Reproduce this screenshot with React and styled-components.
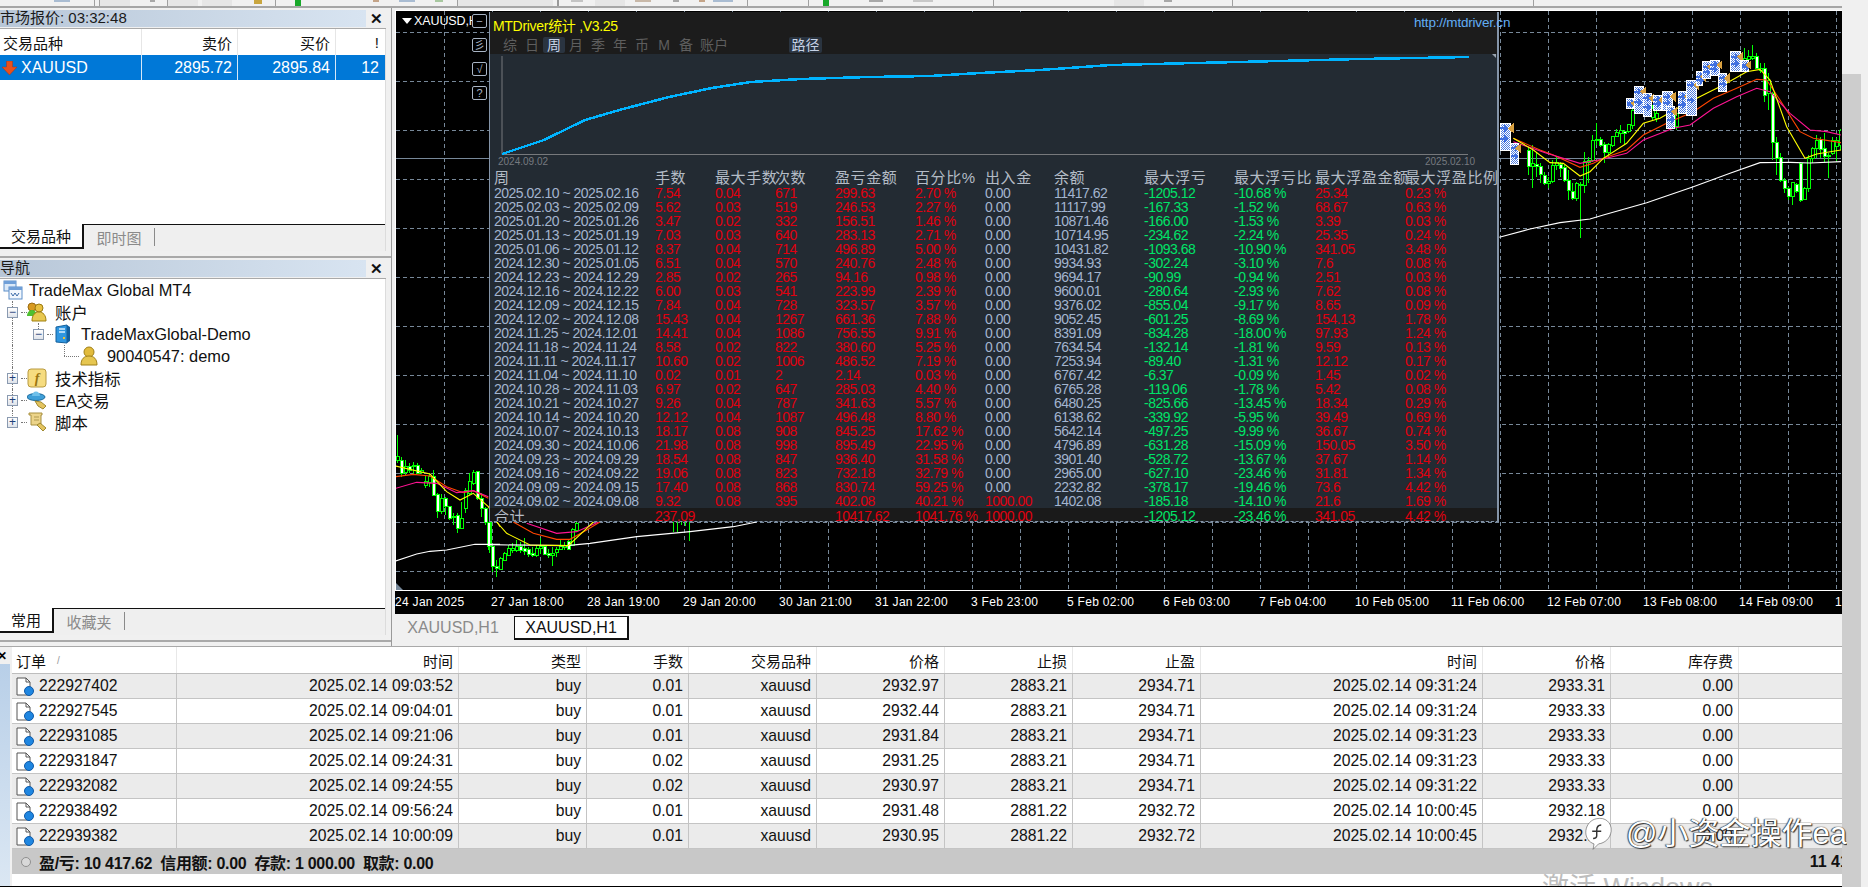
import styled, { createGlobalStyle } from 'styled-components';

const UI_FONT = `"Liberation Sans", "Noto Sans CJK SC", sans-serif`;

const GlobalStyle = createGlobalStyle`
    html, body {
        margin: 0;
        padding: 0;
        background: #f0f0f0;
    }
    #root {
        width: 1868px;
        height: 887px;
    }
`;

const Page = styled.div`
    position: relative;
    display: grid;
    grid-template-columns: 1842px 19px 7px;
    grid-template-rows: 74px 1fr;
    width: 1868px;
    height: 887px;
    overflow: hidden;
    font-family: ${UI_FONT};
    background: #f0f0f0;
    color: #000;
`;

const Main = styled.div`
    grid-row: 1 / 3;
    grid-column: 1;
    display: flex;
    flex-direction: column;
    min-width: 0;
`;

const ScrollTrack = styled.div`
    grid-row: 1;
    grid-column: 2 / 4;
    background: #f0f0f0;
`;
const ScrollThumb = styled.div`
    grid-row: 2;
    grid-column: 2;
    background: #cdcdcd;
`;

/* ---------- toolbar, only the bottom sliver of it is on screen ---------- */

const Toolbar = styled.div`
    display: flex;
    align-items: flex-start;
    height: 6px;
    flex: none;
    background: #f1f1f1;
    border-bottom: 2px solid #a6a6a6;
    overflow: hidden;
`;
const ToolBit = styled.span`
    flex: none;
    width: ${({ $w }) => $w}px;
    height: ${({ $h }) => $h || 6}px;
    margin-left: ${({ $gap }) => $gap}px;
    background: ${({ $color }) => $color};
`;

const toolBits = [
    [54, 16, 2, '#a9bcd2'], [24, 1, 6, '#a0a0a0'], [4, 1, 6, '#a0a0a0'], [0, 30, 6, '#e6e6e6'],
    [20, 5, 2, '#a8a8a8'], [12, 1, 6, '#a0a0a0'], [0, 30, 6, '#e6e6e6'], [4, 30, 6, '#e6e6e6'],
    [22, 8, 4, '#c9a640'], [13, 1, 6, '#a0a0a0'], [19, 6, 6, '#18a82a'], [72, 6, 2, '#c4a488'],
    [20, 16, 2, '#a9bcd2'], [20, 8, 2, '#a8c8a0'], [14, 1, 6, '#a0a0a0'], [0, 95, 6, '#e6e6e6'],
    [4, 2, 6, '#999999'], [12, 12, 2, '#c4c4c4'], [12, 30, 6, '#e6e6e6'], [10, 16, 2, '#c8b8a8'],
    [22, 6, 2, '#a8a8a8'], [20, 6, 2, '#c4a488'], [8, 20, 2, '#a9bcd2'], [14, 1, 6, '#a0a0a0'],
    [60, 1, 6, '#a0a0a0'], [14, 6, 6, '#18a82a'], [40, 14, 2, '#a8a8a8'], [30, 20, 2, '#c8c8c8'],
    [60, 1, 6, '#a0a0a0'], [120, 30, 6, '#e6e6e6'], [20, 8, 2, '#a8a8a8'], [60, 1, 6, '#a0a0a0'],
    [300, 1, 6, '#a0a0a0'],
];

/* ---------- left side panels ---------- */

const Workspace = styled.div`
    display: flex;
    height: 638px;
    flex: none;
`;

const Sidebar = styled.div`
    display: flex;
    flex-direction: column;
    width: 392px;
    flex: none;
    border-right: 1px solid #9a9a9a;
    box-sizing: border-box;
`;

const Panel = styled.section`
    display: flex;
    flex-direction: column;
    height: ${({ $height }) => $height}px;
    padding: 2px 5px 5px 0;
    box-sizing: border-box;
    border-bottom: 2px solid #a9a9a9;
`;

const PanelHeader = styled.header`
    display: flex;
    align-items: center;
    height: 17px;
    flex: none;
    border-bottom: 1px solid #a9a9a9;
    padding-bottom: 1px;
`;
const PanelTitle = styled.div`
    flex: 1;
    height: 17px;
    line-height: 15px;
    font-size: 15px;
    color: #1a1a1a;
    background: linear-gradient(to right, #b8c7d8, #d8e4f1);
    white-space: nowrap;
`;
const CloseBox = styled.span`
    width: 20px;
    flex: none;
    font-size: 15px;
    line-height: 16px;
    font-weight: bold;
    text-align: center;
    color: #111;
`;

const PanelBody = styled.div`
    flex: 1;
    background: #fff;
    min-height: 0;
    border-right: 1px solid #dcdcdc;
`;

const QuoteGrid = styled.div`
    display: grid;
    grid-template-columns: 142px 96px 98px 48px;
    height: ${({ $head }) => ($head ? 26 : 25)}px;
    align-items: center;
    background: ${({ $head }) => ($head ? '#fff' : '#0078d7')};
    color: ${({ $head }) => ($head ? '#111' : '#fff')};
`;
const QuoteCell = styled.div`
    display: flex;
    align-items: center;
    justify-content: ${({ $left }) => ($left ? 'flex-start' : 'flex-end')};
    height: 100%;
    padding: ${({ $left }) => ($left ? '0 0 0 3px' : '0 5px 0 0')};
    box-sizing: border-box;
    border-right: 1px solid ${({ $head }) => ($head ? '#e6e6e6' : '#d6e8f8')};
    font-size: ${({ $head }) => ($head ? 15 : 16)}px;
    &:last-child {
        border-right: none;
    }
`;

const TabStrip = styled.div`
    display: flex;
    height: 27px;
    flex: none;
    box-sizing: border-box;
    background: #efefef;
    border-right: 1px solid #dcdcdc;
`;
const SideTab = styled.div`
    display: flex;
    align-items: center;
    justify-content: center;
    box-sizing: border-box;
    height: 25px;
    width: ${({ $w }) => $w}px;
    flex: none;
    font-size: 15px;
    ${({ $active }) => ($active
        ? 'background:#fff;color:#111;border-right:2px solid #111;border-bottom:2px solid #111;'
        : 'color:#8a8a8a;border-top:1px solid #111;')}
`;
const TabDivider = styled.div`
    flex: 1;
    height: 25px;
    border-top: 1px solid #111;
    box-sizing: border-box;
    &::before {
        content: '';
        display: block;
        width: 1px;
        height: 18px;
        margin-top: 3px;
        background: #8a8a8a;
    }
`;

const Tree = styled.div``;
const TreeRow = styled.div`
    position: relative;
    display: flex;
    align-items: center;
    height: 22px;
    padding-left: ${({ $indent }) => $indent}px;
    font-size: 16.4px;
    color: #111;
    white-space: nowrap;
    /* dotted stem of the tree */
    &::before {
        content: '';
        display: ${({ $stem }) => ($stem ? 'block' : 'none')};
        position: absolute;
        left: 12px;
        top: 0;
        height: ${({ $stem }) => $stem}px;
        border-left: 1px dotted #777;
    }
    /* short stem coming down from the parent row */
    &::after {
        content: '';
        display: ${({ $elbow }) => ($elbow ? 'block' : 'none')};
        position: absolute;
        left: ${({ $elbow }) => $elbow}px;
        top: 0;
        height: ${({ $elbowH }) => $elbowH || 6}px;
        border-left: 1px dotted #777;
    }
`;
const Expander = styled.span`
    position: relative;
    z-index: 1;
    flex: none;
    width: 9px;
    height: 9px;
    margin-right: 3px;
    border: 1px solid #8a9ab0;
    background: linear-gradient(#fff, #dfe3ea);
    display: flex;
    align-items: center;
    justify-content: center;
    font-size: 12px;
    line-height: 9px;
    color: #1f3f7a;
`;
const Dots = styled.span`
    flex: none;
    width: ${({ $w }) => $w || 6}px;
    border-top: 1px dotted #777;
`;
const TreeIcon = styled.svg`
    flex: none;
    width: 20px;
    height: 20px;
    margin-right: ${({ $gap }) => $gap || 8}px;
`;

const AccountsIcon = () => (
    <TreeIcon viewBox="0 0 20 20">
        <circle cx="5" cy="5" r="4" fill="#d89a20" stroke="#9a6a10" />
        <path d="M0 14c0-4 3-6 5-6s5 2 5 6z" fill="#50c030" />
        <circle cx="12" cy="6" r="4" fill="#e8c040" stroke="#9a7a10" />
        <path d="M5 19c0-6 3-9 7-9s7 3 7 9z" fill="#e8c850" stroke="#a08010" />
    </TreeIcon>
);
const ServerIcon = () => (
    <TreeIcon viewBox="0 0 20 20">
        <path d="M3 3l11-2v18l-11-1z" fill="#2f96e0" stroke="#15609c" />
        <path d="M14 1l3 2v14l-3 2z" fill="#145f9e" />
        <path d="M6 5h6M6 8h6" stroke="#d7eeff" strokeWidth="1.5" />
        <rect x="10" y="13" width="2" height="2" fill="#f2c230" />
    </TreeIcon>
);
const UserIcon = () => (
    <TreeIcon viewBox="0 0 20 20">
        <circle cx="10" cy="6" r="5" fill="#e2bb3c" stroke="#a08018" />
        <path d="M2 19c0-6 3-9 8-9s8 3 8 9z" fill="#e6c650" stroke="#a08018" />
    </TreeIcon>
);
const FunctionIcon = () => (
    <TreeIcon viewBox="0 0 20 20">
        <rect x="1" y="1" width="18" height="18" rx="3" fill="#f6dc80" stroke="#b89a40" />
        <text x="10" y="15" fontSize="14" fontStyle="italic" fontWeight="bold" textAnchor="middle" fill="#9a7410" fontFamily="Liberation Serif">f</text>
    </TreeIcon>
);
const ExpertIcon = () => (
    <TreeIcon viewBox="0 0 20 20">
        <ellipse cx="9" cy="7" rx="9" ry="3.5" fill="#3f9fd8" stroke="#1a6a9c" />
        <path d="M5 6c0-6 8-6 8 0z" fill="#6fc0ea" />
        <path d="M8 11l6 1 5 4-3 3-5-3z" fill="#e4c460" stroke="#a08a30" />
    </TreeIcon>
);
const ScriptIcon = () => (
    <TreeIcon viewBox="0 0 20 20">
        <path d="M2 1h13v2h-1v10H4V3H2z" fill="#ecd48a" stroke="#a89040" />
        <path d="M7 5h5M7 8h5" stroke="#b09a50" />
        <path d="M10 13l3-2 6 5-3 3z" fill="#e4c460" stroke="#a08a30" />
    </TreeIcon>
);
const RootIcon = () => (
    <TreeIcon viewBox="0 0 20 20" $gap={6}>
        <rect x="1" y="1" width="12" height="10" fill="#dbe9f8" stroke="#5c8ec8" />
        <rect x="1" y="1" width="12" height="3" fill="#6f9fd8" />
        <rect x="6" y="7" width="13" height="12" fill="#f2f7fd" stroke="#5c8ec8" />
        <rect x="6" y="7" width="13" height="3" fill="#6f9fd8" />
        <path d="M8 13l2 3 2-3 2 3 2-3" fill="none" stroke="#3c6aa8" />
    </TreeIcon>
);
const SellArrowSvg = styled.svg`
    flex: none;
    margin: 0 4px 0 -1px;
`;
const SellArrow = () => (
    <SellArrowSvg width="15" height="14" viewBox="0 0 15 14">
        <path d="M4.5 0h6v6H15L7.500 14 0 6h4.500z" fill="#e8501c" stroke="#b03010" strokeWidth=".5" />
    </SellArrowSvg>
);

/* ---------- chart ---------- */

const ChartColumn = styled.div`
    display: flex;
    flex-direction: column;
    flex: 1;
    min-width: 0;
    padding-top: 2px;
`;
const ChartWindow = styled.div`
    display: flex;
    flex-direction: column;
    height: 604px;
    flex: none;
    margin-left: 3px;
    background: #000;
    border-top: 1px solid #fff;
    box-sizing: border-box;
`;
const Plot = styled.div`
    position: relative;
    height: 579px;
    flex: none;
    border-left: 1px solid #fff;
    border-bottom: 1px solid #fff;
    overflow: hidden;
    box-sizing: content-box;
`;
const PlotSvg = styled.svg`
    display: block;
`;
const TimeAxis = styled.div`
    display: flex;
    height: 23px;
    overflow: hidden;
    color: #fff;
    font-size: 12px;
    letter-spacing: 0.3px;
    align-items: center;
    padding-bottom: 1px;
    box-sizing: border-box;
`;
const TimeLabel = styled.span`
    flex: none;
    width: 96px;
    white-space: nowrap;
`;
const SymbolLabel = styled.div`
    position: absolute;
    left: 6px;
    top: 1px;
    display: flex;
    align-items: center;
    width: 70px;
    height: 18px;
    overflow: hidden;
    color: #fff;
    font-size: 12.5px;
    letter-spacing: -0.1px;
    white-space: nowrap;
    &::before {
        content: '';
        flex: none;
        width: 0;
        height: 0;
        margin-right: 2px;
        border-left: 5px solid transparent;
        border-right: 5px solid transparent;
        border-top: 6px solid #fff;
    }
`;
const SideButtons = styled.div`
    position: absolute;
    left: 76px;
    top: 3px;
    display: flex;
    flex-direction: column;
    gap: 10px;
`;
const SideButton = styled.span`
    display: flex;
    align-items: center;
    justify-content: center;
    width: 13px;
    height: 12px;
    border: 1px solid #a8b4c4;
    border-radius: 2px;
    background: #000;
    font-size: 11px;
    line-height: 11px;
    color: #a8b4c4;
`;

const ChartTabs = styled.div`
    display: flex;
    align-items: flex-end;
    height: 26px;
    flex: none;
    padding-bottom: 3px;
`;
const ChartTab = styled.div`
    display: flex;
    align-items: center;
    justify-content: center;
    box-sizing: border-box;
    height: 24px;
    width: ${({ $active }) => ($active ? 115 : 122)}px;
    font-size: 16px;
    ${({ $active }) => ($active
        ? 'background:#fff;color:#111;border:1px solid #111;border-bottom-width:2px;border-right-width:2px;'
        : 'color:#8a8a8a;')}
`;

/* ---------- statistics panel floating over the chart ---------- */

const StatsPanel = styled.div`
    position: absolute;
    left: 93px;
    top: 1px;
    width: 1010px;
    height: 510px;
    box-sizing: border-box;
    background: #232b33;
    border-right: 2px solid #8494a8;
    border-bottom: 1px dashed #8494a8;
    border-left: 1px solid #8494a8;
    overflow: hidden;
    display: flex;
    flex-direction: column;
`;
const StatsTop = styled.div`
    height: 42px;
    flex: none;
    background: #1c1c1c;
`;
const StatsTitle = styled.div`
    height: 25px;
    padding-left: 3px;
    display: flex;
    align-items: center;
    font-size: 14px;
    letter-spacing: -0.3px;
    color: #ffff00;
`;
const StatsTabs = styled.div`
    display: flex;
    height: 17px;
    padding-left: 9px;
`;
const StatsTab = styled.span`
    flex: none;
    width: ${({ $w }) => $w || 22}px;
    margin-right: ${({ $gap }) => $gap || 0}px;
    height: 16px;
    line-height: 16px;
    text-align: center;
    font-size: 14px;
    border-radius: 2px;
    color: ${({ $on }) => ($on ? '#c6d2e6' : '#5e5e5e')};
    background: ${({ $on }) => ($on ? '#2a3440' : 'transparent')};
`;
const LinkLabel = styled.div`
    position: absolute;
    left: 1018px;
    top: 4px;
    font-size: 13.5px;
    letter-spacing: -0.2px;
    color: #62aef5;
    white-space: nowrap;
`;
const EquitySvg = styled.svg`
    display: block;
    flex: none;
`;
const StatRow = styled.div`
    display: grid;
    grid-template-columns: 161px 60px 60px 60px 80px 70px 69px 90px 90px 81px 90px 1fr;
    height: ${({ $h }) => $h}px;
    line-height: ${({ $lh, $h }) => $lh || $h}px;
    padding-left: 4px;
    flex: none;
    overflow: hidden;
    white-space: nowrap;
    font-size: 14px;
    letter-spacing: -0.5px;
    background: ${({ $total }) => ($total ? '#1a1a1a' : 'transparent')};
`;
const HeadCell = styled.span`
    font-size: 15px;
    letter-spacing: 0.6px;
    color: #b4bcc6;
    white-space: nowrap;
`;
const COLORS = { red: '#e0000f', green: '#00e468', slate: '#a3b5cf' };
const StatCell = styled.span`
    color: ${({ $tone }) => COLORS[$tone]};
`;

/* ---------- terminal at the bottom ---------- */

const Terminal = styled.div`
    position: relative;
    display: flex;
    height: 241px;
    flex: none;
    border-bottom: 1px solid #000;
    box-sizing: border-box;
    border-top: 1px solid #a9a9a9;
    overflow: hidden;
`;
const TerminalStrip = styled.div`
    width: 12px;
    flex: none;
    background: linear-gradient(#f0f0f0 0 17px, #b8cfe8 17px, #dbe7f3);
    font-size: 12px;
    font-weight: bold;
    line-height: 18px;
    overflow: hidden;
    text-indent: -3px;
    border-right: 2px solid #f0f0f0;
    box-sizing: border-box;
`;
const TerminalBody = styled.div`
    flex: 1;
    background: #fff;
    min-width: 0;
`;
const ORDER_COLUMNS = '165px 282px 128px 102px 128px 128px 128px 128px 282px 128px 128px 1fr';
const OrderHead = styled.div`
    display: grid;
    grid-template-columns: ${ORDER_COLUMNS};
    height: 26px;
    background: #fff;
    border-bottom: 1px solid #bdbdbd;
    font-size: 15px;
    color: #111;
`;
const OrderRow = styled.div`
    display: grid;
    grid-template-columns: ${ORDER_COLUMNS};
    height: 25px;
    box-sizing: border-box;
    background: ${({ $odd }) => ($odd ? '#ebebeb' : '#fff')};
    border-bottom: 1px solid #c4c4c4;
    font-size: 15.7px;
    color: #111;
`;
const OrderCell = styled.div`
    display: flex;
    align-items: center;
    justify-content: ${({ $first }) => ($first ? 'flex-start' : 'flex-end')};
    padding: ${({ $first }) => ($first ? '0 0 0 4px' : '0 5px 0 0')};
    border-right: 1px solid ${({ $head }) => ($head ? '#e8e8e8' : '#c4c4c4')};
    white-space: nowrap;
    &:last-child {
        border-right: none;
    }
`;
const SortMark = styled.span`
    margin-left: 11px;
    font-size: 10px;
    color: #999;
`;
const DocIcon = styled.svg`
    flex: none;
    width: 18px;
    height: 19px;
    margin-right: 5px;
`;
const OrderIcon = () => (
    <DocIcon viewBox="0 0 18 19">
        <path d="M1 1h9l4 4v13H1z" fill="#fff" stroke="#555" />
        <path d="M10 1v4h4" fill="none" stroke="#555" />
        <circle cx="13" cy="14" r="4.500" fill="#1f86e0" stroke="#0f5aa8" />
    </DocIcon>
);
const Summary = styled.div`
    display: flex;
    align-items: center;
    justify-content: space-between;
    height: 25px;
    background: #c8c8c8;
    font-size: 16px;
    font-weight: bold;
    color: #111;
    padding-left: 9px;
    white-space: nowrap;
    overflow: hidden;
`;
const SummaryLeft = styled.div`
    display: flex;
    align-items: center;
    gap: 8px;
    letter-spacing: -0.3px;
`;
const SummaryRight = styled.div`
    margin-right: -38px;
`;
const StatusDot = styled.span`
    flex: none;
    width: 8px;
    height: 8px;
    border: 1px solid #8f8f8f;
    border-radius: 50%;
    background: #d8d8d8;
`;
const ActivateHint = styled.div`
    position: absolute;
    left: 1542px;
    top: 225px;
    font-size: 27px;
    line-height: 32px;
    color: #bdbdbd;
    white-space: nowrap;
`;
const Watermark = styled.div`
    position: absolute;
    left: 1585px;
    top: 816px;
    display: flex;
    align-items: center;
    gap: 14px;
    width: 262px;
    overflow: hidden;
    font-size: 31px;
    line-height: 36px;
    color: #fff;
    white-space: nowrap;
    text-shadow: 0 0 1px #111, 1px 1px 1px #333, -1px 0 1px #555;
`;

/* ---------- data ---------- */

const stats = [
    ['2025.02.10 ~ 2025.02.16', '7.54', '0.04', '671', '299.63', '2.70 %', '0.00', '11417.62', '-1205.12', '-10.68 %', '25.34', '0.23 %'],
    ['2025.02.03 ~ 2025.02.09', '5.62', '0.03', '519', '246.53', '2.27 %', '0.00', '11117.99', '-167.33', '-1.52 %', '68.67', '0.63 %'],
    ['2025.01.20 ~ 2025.01.26', '3.47', '0.02', '332', '156.51', '1.46 %', '0.00', '10871.46', '-166.00', '-1.53 %', '3.39', '0.03 %'],
    ['2025.01.13 ~ 2025.01.19', '7.03', '0.03', '640', '283.13', '2.71 %', '0.00', '10714.95', '-234.62', '-2.24 %', '25.35', '0.24 %'],
    ['2025.01.06 ~ 2025.01.12', '8.37', '0.04', '714', '496.89', '5.00 %', '0.00', '10431.82', '-1093.68', '-10.90 %', '341.05', '3.48 %'],
    ['2024.12.30 ~ 2025.01.05', '6.51', '0.04', '570', '240.76', '2.48 %', '0.00', '9934.93', '-302.24', '-3.10 %', '7.6', '0.08 %'],
    ['2024.12.23 ~ 2024.12.29', '2.85', '0.02', '265', '94.16', '0.98 %', '0.00', '9694.17', '-90.99', '-0.94 %', '2.51', '0.03 %'],
    ['2024.12.16 ~ 2024.12.22', '6.00', '0.03', '541', '223.99', '2.39 %', '0.00', '9600.01', '-280.64', '-2.93 %', '7.62', '0.08 %'],
    ['2024.12.09 ~ 2024.12.15', '7.84', '0.04', '728', '323.57', '3.57 %', '0.00', '9376.02', '-855.04', '-9.17 %', '8.65', '0.09 %'],
    ['2024.12.02 ~ 2024.12.08', '15.43', '0.04', '1267', '661.36', '7.88 %', '0.00', '9052.45', '-601.25', '-8.69 %', '154.13', '1.78 %'],
    ['2024.11.25 ~ 2024.12.01', '14.41', '0.04', '1086', '756.55', '9.91 %', '0.00', '8391.09', '-834.28', '-18.00 %', '97.93', '1.24 %'],
    ['2024.11.18 ~ 2024.11.24', '8.58', '0.02', '822', '380.60', '5.25 %', '0.00', '7634.54', '-132.14', '-1.81 %', '9.59', '0.13 %'],
    ['2024.11.11 ~ 2024.11.17', '10.60', '0.02', '1006', '486.52', '7.19 %', '0.00', '7253.94', '-89.40', '-1.31 %', '12.12', '0.17 %'],
    ['2024.11.04 ~ 2024.11.10', '0.02', '0.01', '2', '2.14', '0.03 %', '0.00', '6767.42', '-6.37', '-0.09 %', '1.45', '0.02 %'],
    ['2024.10.28 ~ 2024.11.03', '6.97', '0.02', '647', '285.03', '4.40 %', '0.00', '6765.28', '-119.06', '-1.78 %', '5.42', '0.08 %'],
    ['2024.10.21 ~ 2024.10.27', '9.26', '0.04', '787', '341.63', '5.57 %', '0.00', '6480.25', '-825.66', '-13.45 %', '18.34', '0.29 %'],
    ['2024.10.14 ~ 2024.10.20', '12.12', '0.04', '1087', '496.48', '8.80 %', '0.00', '6138.62', '-339.92', '-5.95 %', '39.49', '0.69 %'],
    ['2024.10.07 ~ 2024.10.13', '18.17', '0.08', '908', '845.25', '17.62 %', '0.00', '5642.14', '-497.25', '-9.99 %', '36.67', '0.74 %'],
    ['2024.09.30 ~ 2024.10.06', '21.98', '0.08', '998', '895.49', '22.95 %', '0.00', '4796.89', '-631.28', '-15.09 %', '150.05', '3.50 %'],
    ['2024.09.23 ~ 2024.09.29', '18.54', '0.08', '847', '936.40', '31.58 %', '0.00', '3901.40', '-528.72', '-13.67 %', '37.67', '1.14 %'],
    ['2024.09.16 ~ 2024.09.22', '19.06', '0.08', '823', '732.18', '32.79 %', '0.00', '2965.00', '-627.10', '-23.46 %', '31.81', '1.34 %'],
    ['2024.09.09 ~ 2024.09.15', '17.40', '0.08', '868', '830.74', '59.25 %', '0.00', '2232.82', '-378.17', '-19.46 %', '73.6', '4.42 %'],
    ['2024.09.02 ~ 2024.09.08', '9.32', '0.08', '395', '402.08', '40.21 %', '1000.00', '1402.08', '-185.18', '-14.10 %', '21.6', '1.69 %'],
];
const statHeads = ['周', '手数', '最大手数', '次数', '盈亏金额', '百分比%', '出入金', '余额', '最大浮亏', '最大浮亏比', '最大浮盈金额', '最大浮盈比例'];
const statTotal = ['', '237.09', '', '', '10417.62', '1041.76 %', '1000.00', '', '-1205.12', '-23.46 %', '341.05', '4.42 %'];
const toneOf = (i, value) => {
    if (i === 0 || i === 7) return 'slate';
    if (i === 6) return value === '0.00' ? 'slate' : 'red';
    return i === 8 || i === 9 ? 'green' : 'red';
};

const orders = [
    ['222927402', '2025.02.14 09:03:52', '0.01', '2932.97', '2883.21', '2934.71', '2025.02.14 09:31:24', '2933.31'],
    ['222927545', '2025.02.14 09:04:01', '0.01', '2932.44', '2883.21', '2934.71', '2025.02.14 09:31:24', '2933.33'],
    ['222931085', '2025.02.14 09:21:06', '0.01', '2931.84', '2883.21', '2934.71', '2025.02.14 09:31:23', '2933.33'],
    ['222931847', '2025.02.14 09:24:31', '0.02', '2931.25', '2883.21', '2934.71', '2025.02.14 09:31:23', '2933.33'],
    ['222932082', '2025.02.14 09:24:55', '0.02', '2930.97', '2883.21', '2934.71', '2025.02.14 09:31:22', '2933.33'],
    ['222938492', '2025.02.14 09:56:24', '0.01', '2931.48', '2881.22', '2932.72', '2025.02.14 10:00:45', '2932.18'],
    ['222939382', '2025.02.14 10:00:09', '0.01', '2930.95', '2881.22', '2932.72', '2025.02.14 10:00:45', '2932.18'],
];
const orderHeads = ['时间', '类型', '手数', '交易品种', '价格', '止损', '止盈', '时间', '价格', '库存费', ''];

const timeLabels = ['24 Jan 2025', '27 Jan 18:00', '28 Jan 19:00', '29 Jan 20:00', '30 Jan 21:00', '31 Jan 22:00', '3 Feb 23:00', '5 Feb 02:00', '6 Feb 03:00', '7 Feb 04:00', '10 Feb 05:00', '11 Feb 06:00', '12 Feb 07:00', '13 Feb 08:00', '14 Feb 09:00', '17 Feb 10:00'];

// all chart numbers were read off 3x crops, so they get mapped back to page pixels here
const leftMap = (x, y) => [x / 3, 250 + y / 3];
const midMap = (x, y) => [390 + x / 3, 450 + y / 3];
const rightMap = (x, y) => [1480 + x / 3, 30 + y / 3];

// x, body top, body bottom, wick top, wick bottom, 1 = hollow (rising)
const leftCandles = [
    [1190, 620, 630, 555, 640, 1], [1202, 630, 670, 620, 680, 0], [1214, 650, 668, 630, 675, 1], [1226, 648, 660, 640, 670, 0],
    [1238, 645, 650, 635, 672, 0], [1250, 645, 670, 640, 672, 0], [1262, 660, 668, 655, 672, 1], [1274, 695, 705, 675, 715, 1],
    [1286, 680, 697, 670, 710, 1], [1298, 678, 735, 660, 735, 0], [1310, 733, 785, 730, 803, 0], [1322, 745, 785, 732, 793, 1],
    [1334, 745, 770, 740, 795, 0], [1346, 770, 805, 768, 810, 0], [1358, 798, 803, 790, 825, 1], [1370, 795, 835, 790, 850, 0],
    [1382, 805, 835, 755, 838, 1], [1394, 720, 775, 715, 790, 1], [1406, 695, 730, 668, 735, 1], [1418, 668, 700, 660, 705, 1],
    [1430, 665, 745, 662, 750, 0], [1442, 745, 775, 730, 800, 0], [1454, 775, 818, 770, 825, 0], [1466, 818, 888, 815, 910, 0],
];
const midCandles = [
    [295, 218, 288, 218, 300, 0], [307, 290, 350, 288, 365, 0], [319, 350, 355, 330, 380, 0], [331, 325, 357, 322, 358, 1],
    [343, 310, 330, 306, 333, 1], [355, 295, 315, 285, 318, 1], [367, 295, 300, 280, 310, 1], [379, 290, 300, 270, 305, 1],
    [391, 290, 300, 277, 310, 0], [403, 295, 305, 265, 315, 0], [415, 298, 312, 290, 322, 0], [427, 310, 315, 290, 320, 0],
    [439, 295, 317, 285, 322, 1], [451, 290, 295, 265, 312, 1], [463, 290, 312, 285, 315, 0], [475, 310, 315, 298, 325, 0],
    [487, 310, 315, 290, 348, 1], [499, 297, 307, 290, 320, 1], [511, 290, 297, 270, 300, 1], [523, 285, 292, 275, 300, 1],
    [535, 275, 297, 270, 300, 0], [547, 238, 285, 235, 287, 1], [559, 220, 240, 215, 242, 1],
    [848, 200, 210, 200, 245, 1], [860, 200, 210, 200, 246, 1], [872, 200, 210, 200, 225, 1], [884, 200, 210, 200, 228, 1], [896, 205, 215, 205, 272, 1],
];
const rightCandles = [
    [145, 360, 408, 350, 435, 0], [157, 400, 410, 345, 475, 1], [169, 403, 410, 365, 440, 0], [181, 408, 432, 400, 460, 0],
    [193, 435, 460, 425, 465, 0], [205, 453, 460, 440, 475, 1], [217, 405, 455, 390, 460, 1], [229, 398, 405, 380, 420, 1],
    [241, 403, 415, 395, 440, 0], [253, 412, 452, 405, 455, 0], [265, 450, 482, 420, 510, 0], [277, 484, 505, 460, 510, 0],
    [289, 460, 505, 455, 512, 1], [301, 462, 467, 455, 625, 0], [313, 395, 465, 365, 488, 1], [325, 390, 397, 380, 460, 1],
    [337, 330, 392, 315, 395, 1], [349, 327, 332, 280, 345, 1], [361, 328, 345, 320, 350, 0], [373, 343, 368, 335, 400, 0],
    [385, 342, 368, 338, 385, 1], [397, 320, 345, 318, 350, 1], [409, 307, 318, 298, 320, 1], [421, 302, 310, 285, 340, 1],
    [433, 303, 310, 300, 342, 0], [445, 284, 305, 283, 310, 1], [457, 240, 285, 235, 297, 1], [517, 235, 262, 225, 270, 1],
    [529, 250, 265, 240, 275, 1], [589, 250, 290, 245, 300, 1], [793, 85, 90, 55, 95, 1], [805, 80, 88, 60, 90, 1],
    [817, 80, 85, 45, 90, 1], [829, 80, 115, 70, 118, 0], [841, 115, 120, 100, 130, 1], [853, 115, 195, 100, 215, 0],
    [865, 150, 190, 130, 240, 1], [877, 190, 338, 185, 390, 0], [889, 338, 385, 320, 435, 0], [901, 382, 450, 370, 455, 0],
    [913, 450, 475, 445, 490, 0], [925, 475, 500, 470, 510, 0], [937, 458, 500, 455, 525, 1], [949, 462, 485, 460, 490, 0],
    [961, 400, 510, 395, 515, 0], [973, 475, 508, 470, 510, 1], [985, 385, 475, 375, 485, 1], [997, 355, 385, 350, 400, 1],
    [1009, 330, 355, 315, 385, 1], [1021, 328, 358, 320, 385, 0], [1033, 355, 380, 310, 395, 0], [1045, 375, 380, 370, 445, 1],
    [1057, 330, 370, 320, 375, 1], [1069, 332, 350, 325, 392, 1], [1081, 300, 345, 298, 360, 1],
];

const leftLines = {
    white: [[1187, 933], [1250, 912], [1290, 904], [1340, 900], [1425, 883], [1500, 883]],
    yellow: [[1187, 648], [1290, 672], [1340, 725], [1380, 750], [1420, 730], [1465, 770], [1500, 830]],
    orange: [[1187, 680], [1240, 673], [1290, 678], [1340, 710], [1390, 728], [1420, 722], [1465, 745]],
    pink: [[1187, 715], [1250, 697], [1310, 700], [1370, 728], [1420, 722], [1465, 740]],
};
const midLines = {
    white: [[295, 284], [530, 287], [600, 280], [740, 260], [900, 245], [1030, 230], [1100, 216]],
    yellow: [[320, 216], [350, 250], [420, 285], [535, 287], [590, 235], [610, 216]],
    orange: [[370, 216], [430, 250], [500, 268], [540, 268], [590, 240], [630, 216]],
    pink: [[410, 220], [500, 250], [560, 245], [625, 216]],
};
const rightLines = {
    white: [[58, 622], [150, 597], [240, 578], [330, 567], [370, 555], [500, 518], [640, 470], [750, 430], [840, 398], [930, 397], [990, 399], [1083, 395]],
    yellow: [[100, 325], [160, 360], [210, 398], [250, 400], [300, 438], [330, 425], [370, 385], [440, 340], [490, 280], [540, 265], [600, 230], [680, 190], [730, 165], [800, 125], [840, 118], [870, 150], [920, 290], [975, 385], [1010, 372], [1083, 360]],
    orange: [[100, 325], [180, 360], [220, 375], [300, 412], [340, 400], [370, 385], [440, 360], [490, 315], [560, 280], [640, 245], [700, 205], [770, 175], [830, 148], [860, 150], [900, 210], [960, 305], [1000, 325], [1083, 338]],
    pink: [[100, 335], [200, 370], [300, 400], [370, 387], [440, 370], [490, 330], [580, 295], [630, 285], [700, 235], [770, 200], [830, 175], [870, 185], [930, 250], [990, 300], [1040, 305], [1083, 315]],
};
const lineColors = { white: '#ffffff', orange: '#ff4500', pink: '#ff1493', yellow: '#ffff00' };

// trade markers: x, y, w, h in crop numbers
const markers = [
    [60, 280, 32, 80], [92, 340, 22, 62], [440, 205, 20, 30], [463, 170, 26, 80], [490, 190, 24, 70], [520, 195, 24, 45],
    [548, 185, 30, 55], [560, 230, 22, 65], [595, 185, 25, 65], [620, 150, 28, 105], [648, 125, 20, 40], [668, 95, 22, 50],
    [690, 90, 28, 45], [716, 130, 24, 55], [752, 65, 28, 60], [785, 90, 20, 35],
];

const Candle = ({ row, map }) => {
    const [x0, top, bottom, wickTop, wickBottom, hollow] = row;
    const [x, yTop] = map(x0, top);
    const [, yBottom] = map(x0, bottom);
    const [, wTop] = map(x0, wickTop);
    const [, wBottom] = map(x0, wickBottom);
    const cx = Math.round(x) + 0.5;
    return (
        <g shapeRendering="crispEdges">
            <line x1={cx} x2={cx} y1={wTop} y2={wBottom} stroke="#00ff00" />
            <rect x={cx - 1.5} y={yTop} width={3} height={Math.max(yBottom - yTop, 1)} fill={hollow ? '#000' : '#fff'} stroke="#00ff00" />
        </g>
    );
};

const Line = ({ points, map, color }) => (
    <polyline points={points.map(([x, y]) => map(x, y).join(',')).join(' ')} fill="none" stroke={color} strokeWidth="1.1" />
);

const Marker = ({ m }) => {
    const [x, y] = rightMap(m[0], m[1]);
    const w = m[2] / 3;
    const h = m[3] / 3;
    return (
        <g shapeRendering="crispEdges">
            <rect x={x} y={y} width={w} height={h} fill="url(#dither)" stroke="#fff" />
            <path d={`M${x} ${y + 4}h4v-3l4 4-4 4v-3h-4z`} fill="#3f6fe0" />
            <path d={`M${x} ${y + h * 0.55}h4v-3l4 4-4 4v-3h-4z`} fill="#3f6fe0" />
            <path d={`M${x + w + 3} ${y}v10l-6-5z`} fill="#d8a040" />
        </g>
    );
};

const ChartDrawing = () => {
    const xs = Array.from({ length: 30 }, (_, i) => 444 + i * 48);
    const ys = Array.from({ length: 12 }, (_, i) => 32 + i * 49);
    return (
        <PlotSvg width="1445" height="579" viewBox="396 11 1445 579">
            <defs>
                <pattern id="dither" width="2" height="2" patternUnits="userSpaceOnUse">
                    <rect width="2" height="2" fill="#fff" />
                    <rect width="1" height="1" fill="#4f7de0" />
                    <rect x="1" y="1" width="1" height="1" fill="#4f7de0" />
                </pattern>
            </defs>
            <g stroke="#778899" strokeDasharray="4 3" shapeRendering="crispEdges">
                {xs.map((x) => <line key={x} x1={x + 0.5} x2={x + 0.5} y1="11" y2="590" />)}
                {ys.map((y) => <line key={y} x1="396" x2="1841" y1={y + 0.5} y2={y + 0.5} />)}
            </g>
            <line x1="396" x2="1841" y1="158.500" y2="158.500" stroke="#778899" />
            {leftCandles.map((c) => <Candle key={c[0]} row={c} map={leftMap} />)}
            {midCandles.map((c) => <Candle key={c[0]} row={c} map={midMap} />)}
            {rightCandles.map((c) => <Candle key={c[0]} row={c} map={rightMap} />)}
            {Object.keys(lineColors).map((name) => (
                <g key={name}>
                    <Line points={leftLines[name]} map={leftMap} color={lineColors[name]} />
                    <Line points={midLines[name]} map={midMap} color={lineColors[name]} />
                    <Line points={rightLines[name]} map={rightMap} color={lineColors[name]} />
                </g>
            ))}
            {markers.map((m) => <Marker key={`${m[0]}-${m[1]}`} m={m} />)}
            <path d="M396 583l7 7h-7z" fill="#778899" />
        </PlotSvg>
    );
};

const equityPoints = [
    [502, 154], [544, 140], [585, 120], [623, 109], [669, 97], [712, 88], [751, 82], [801, 79], [869, 77], [930, 76],
    [980, 73], [1040, 70], [1111, 65], [1238, 62], [1360, 59], [1469, 57],
];

// the curve is stored in page pixels, the svg starts at the panel's left edge and y=54
const EquityChart = () => (
    <EquitySvg width="1007" height="116" viewBox="490 54 1007 116">
        <path d="M502 56V154.500H1468" fill="none" stroke="#77797c" />
        <polyline points={equityPoints.map((p) => p.join(',')).join(' ')} fill="none" stroke="#00b4ff" strokeWidth="2.5" shapeRendering="crispEdges" />
        <text x="498" y="165" fontSize="10" fill="#767a80" fontFamily="Liberation Sans">2024.09.02</text>
        <text x="1425" y="165" fontSize="10" fill="#767a80" fontFamily="Liberation Sans">2025.02.10</text>
        <path d="M1496 50l-4 4 4 4z" fill="#9aa4b0" />
    </EquitySvg>
);

const StatsWindow = () => (
    <>
        <StatsPanel>
            <StatsTop>
                <StatsTitle>MTDriver统计 ,V3.25</StatsTitle>
                <StatsTabs>
                    <StatsTab>综</StatsTab>
                    <StatsTab>日</StatsTab>
                    <StatsTab $on>周</StatsTab>
                    <StatsTab>月</StatsTab>
                    <StatsTab>季</StatsTab>
                    <StatsTab>年</StatsTab>
                    <StatsTab>币</StatsTab>
                    <StatsTab>M</StatsTab>
                    <StatsTab>备</StatsTab>
                    <StatsTab $w={34} $gap={58}>账户</StatsTab>
                    <StatsTab $w={33} $on>路径</StatsTab>
                </StatsTabs>
            </StatsTop>
            <EquityChart />
            <StatRow $h={16}>
                {statHeads.map((h) => <HeadCell key={h}>{h}</HeadCell>)}
            </StatRow>
            {stats.map((row) => (
                <StatRow key={row[0]} $h={14}>
                    {row.map((value, i) => <StatCell key={i} $tone={toneOf(i, value)}>{value}</StatCell>)}
                </StatRow>
            ))}
            <StatRow $h={15} $lh={17} $total>
                {statTotal.map((value, i) => (
                    i === 0
                        ? <HeadCell key={i}>合计</HeadCell>
                        : <StatCell key={i} $tone={toneOf(i, value)}>{value}</StatCell>
                ))}
            </StatRow>
        </StatsPanel>
        <LinkLabel>http://mtdriver.cn</LinkLabel>
    </>
);

export default function App() {
    return (
        <Page>
            <GlobalStyle />
            <Main>
                <Toolbar>
                    {toolBits.map(([gap, w, h, color], i) => <ToolBit key={i} $gap={gap} $w={w} $h={h} $color={color} />)}
                </Toolbar>
                <Workspace>
                    <Sidebar>
                        <Panel $height={250}>
                            <PanelHeader>
                                <PanelTitle>市场报价: 03:32:48</PanelTitle>
                                <CloseBox>✕</CloseBox>
                            </PanelHeader>
                            <PanelBody>
                                <QuoteGrid $head>
                                    <QuoteCell $head $left>交易品种</QuoteCell>
                                    <QuoteCell $head>卖价</QuoteCell>
                                    <QuoteCell $head>买价</QuoteCell>
                                    <QuoteCell $head>!</QuoteCell>
                                </QuoteGrid>
                                <QuoteGrid>
                                    <QuoteCell $left><SellArrow />XAUUSD</QuoteCell>
                                    <QuoteCell>2895.72</QuoteCell>
                                    <QuoteCell>2895.84</QuoteCell>
                                    <QuoteCell>12</QuoteCell>
                                </QuoteGrid>
                            </PanelBody>
                            <TabStrip>
                                <SideTab $active $w={84}>交易品种</SideTab>
                                <SideTab $w={70}>即时图</SideTab>
                                <TabDivider />
                            </TabStrip>
                        </Panel>
                        <Panel $height={384}>
                            <PanelHeader>
                                <PanelTitle>导航</PanelTitle>
                                <CloseBox>✕</CloseBox>
                            </PanelHeader>
                            <PanelBody>
                                <Tree>
                                    <TreeRow $indent={3}><RootIcon />TradeMax Global MT4</TreeRow>
                                    <TreeRow $indent={7} $stem={22}><Expander>−</Expander><Dots /><AccountsIcon />账户</TreeRow>
                                    <TreeRow $indent={33} $stem={22} $elbow={38}><Expander>−</Expander><Dots /><ServerIcon />TradeMaxGlobal-Demo</TreeRow>
                                    <TreeRow $indent={64} $stem={22} $elbow={64} $elbowH={11}><Dots $w={15} /><UserIcon />90040547: demo</TreeRow>
                                    <TreeRow $indent={7} $stem={22}><Expander>+</Expander><Dots /><FunctionIcon />技术指标</TreeRow>
                                    <TreeRow $indent={7} $stem={22}><Expander>+</Expander><Dots /><ExpertIcon />EA交易</TreeRow>
                                    <TreeRow $indent={7} $stem={11}><Expander>+</Expander><Dots /><ScriptIcon />脚本</TreeRow>
                                </Tree>
                            </PanelBody>
                            <TabStrip>
                                <SideTab $active $w={54}>常用</SideTab>
                                <SideTab $w={70}>收藏夹</SideTab>
                                <TabDivider />
                            </TabStrip>
                        </Panel>
                    </Sidebar>
                    <ChartColumn>
                        <ChartWindow>
                            <Plot>
                                <ChartDrawing />
                                <SymbolLabel>XAUUSD,H1</SymbolLabel>
                                <SideButtons>
                                    <SideButton>−</SideButton>
                                    <SideButton>彡</SideButton>
                                    <SideButton>√</SideButton>
                                    <SideButton>?</SideButton>
                                </SideButtons>
                                <StatsWindow />
                            </Plot>
                            <TimeAxis>
                                {timeLabels.map((t) => <TimeLabel key={t}>{t}</TimeLabel>)}
                            </TimeAxis>
                        </ChartWindow>
                        <ChartTabs>
                            <ChartTab>XAUUSD,H1</ChartTab>
                            <ChartTab $active>XAUUSD,H1</ChartTab>
                        </ChartTabs>
                    </ChartColumn>
                </Workspace>
                <Terminal>
                    <TerminalStrip>✕</TerminalStrip>
                    <TerminalBody>
                        <OrderHead>
                            <OrderCell $first $head>订单<SortMark>/</SortMark></OrderCell>
                            {orderHeads.map((h, i) => <OrderCell key={i} $head>{h}</OrderCell>)}
                        </OrderHead>
                        {orders.map((o, i) => (
                            <OrderRow key={o[0]} $odd={i % 2 === 0}>
                                <OrderCell $first><OrderIcon />{o[0]}</OrderCell>
                                <OrderCell>{o[1]}</OrderCell>
                                <OrderCell>buy</OrderCell>
                                <OrderCell>{o[2]}</OrderCell>
                                <OrderCell>xauusd</OrderCell>
                                <OrderCell>{o[3]}</OrderCell>
                                <OrderCell>{o[4]}</OrderCell>
                                <OrderCell>{o[5]}</OrderCell>
                                <OrderCell>{o[6]}</OrderCell>
                                <OrderCell>{o[7]}</OrderCell>
                                <OrderCell>0.00</OrderCell>
                                <OrderCell />
                            </OrderRow>
                        ))}
                        <Summary>
                            <SummaryLeft>
                                <StatusDot />
                                <span>盈/亏: 10 417.62</span>
                                <span>信用额: 0.00</span>
                                <span>存款: 1 000.00</span>
                                <span>取款: 0.00</span>
                            </SummaryLeft>
                            <SummaryRight>11 417.62</SummaryRight>
                        </Summary>
                    </TerminalBody>
                    <ActivateHint>激活 Windows</ActivateHint>
                </Terminal>
            </Main>
            <ScrollTrack />
            <ScrollThumb />
            <Watermark>
                <svg width="30" height="36" viewBox="0 0 30 36">
                    <path d="M13 1c9-2 17 4 16 14-1 8-7 13-14 14l-6 6 1-6C4 27 0 21 1 14 2 7 7 2 13 1z" fill="#fff" stroke="#444" strokeWidth=".6" />
                    <path d="M18 8c-4 0-5 3-5 6v6c0 2-2 3-4 3M8 15h10" fill="none" stroke="#333" strokeWidth="1.6" />
                </svg>
                <span>@小资金操作ea</span>
            </Watermark>
        </Page>
    );
}
